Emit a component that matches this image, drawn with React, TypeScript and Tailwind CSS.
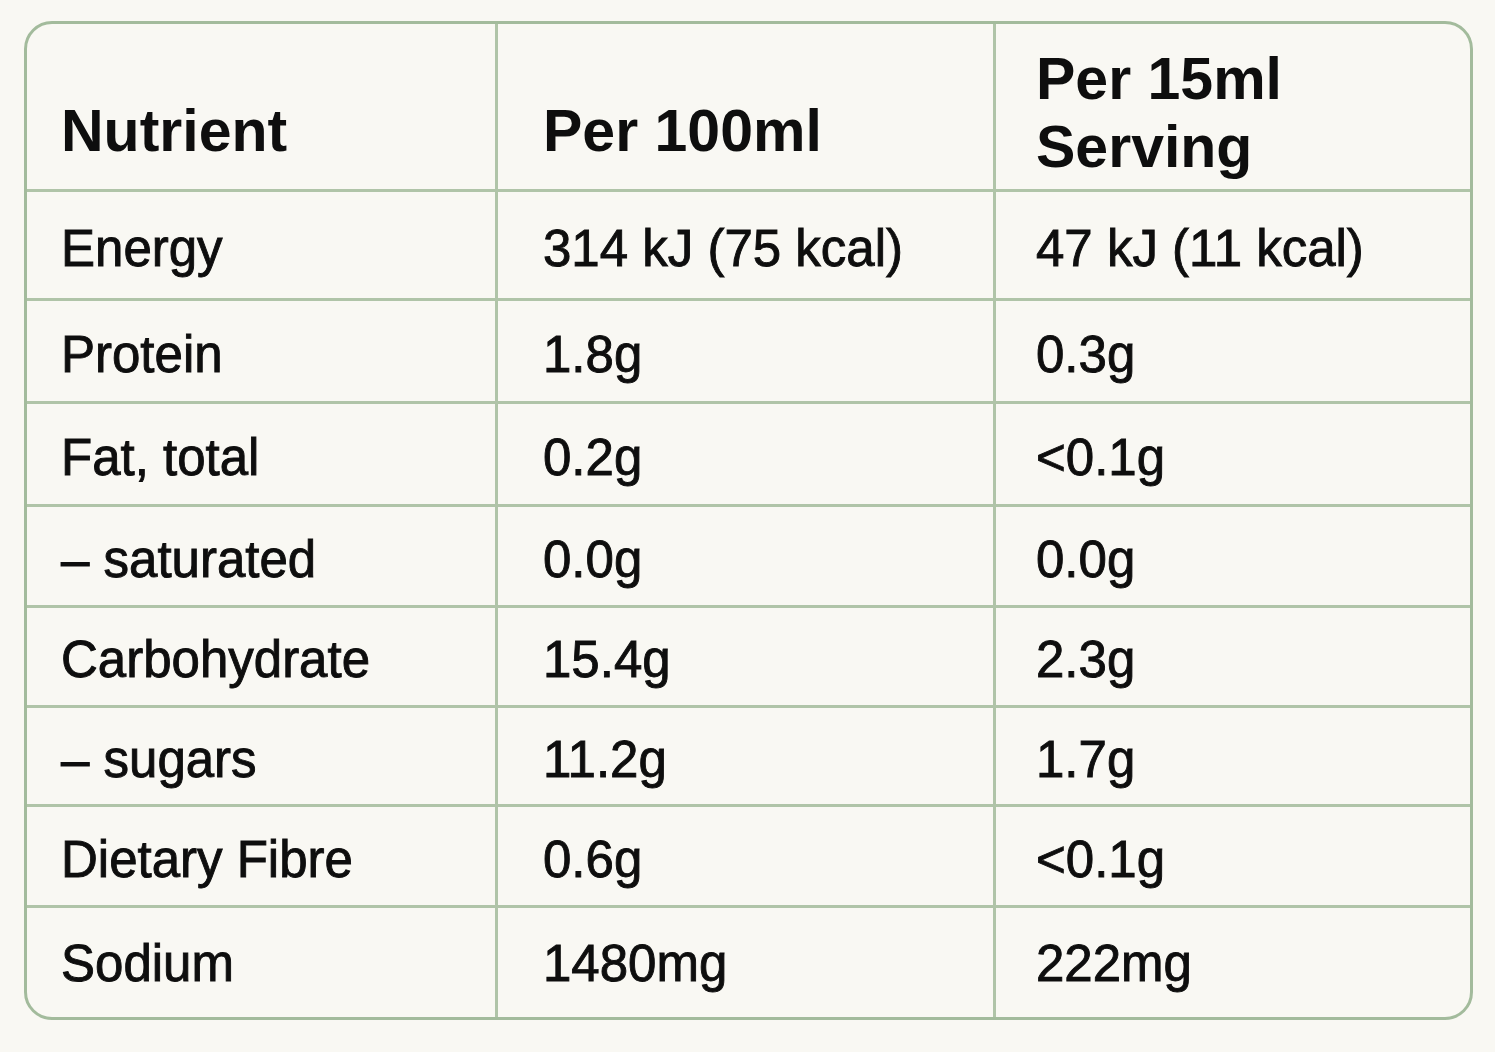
const rows = [
  { name: "Energy", per100: "314 kJ (75 kcal)", perServing: "47 kJ (11 kcal)", h: "h-[109px]", pad: "pt-[8px]" },
  { name: "Protein", per100: "1.8g", perServing: "0.3g", h: "h-[103px]", pad: "pt-[8px]" },
  { name: "Fat, total", per100: "0.2g", perServing: "<0.1g", h: "h-[103px]", pad: "pt-[8px]" },
  { name: "– saturated", per100: "0.0g", perServing: "0.0g", h: "h-[101px]", pad: "pt-[8px]" },
  { name: "Carbohydrate", per100: "15.4g", perServing: "2.3g", h: "h-[100px]", pad: "pt-[8px]" },
  { name: "– sugars", per100: "11.2g", perServing: "1.7g", h: "h-[99px]", pad: "pt-[8px]" },
  { name: "Dietary Fibre", per100: "0.6g", perServing: "<0.1g", h: "h-[101px]", pad: "pt-[8px]" },
  { name: "Sodium", per100: "1480mg", perServing: "222mg", h: "h-[112px]", pad: "pt-[4px]" },
];

export default function App() {
  return (
    <div
      className="w-[1495px] h-[1052px] bg-[#f9f8f3] pt-[21px] pl-[24px] text-[#0e0e0e]"
      style={{ fontFamily: '"Liberation Sans", Arial, sans-serif' }}
    >
      <div className="w-[1449px] border-[3px] border-[#a3bb9c] rounded-[28px] overflow-hidden">
        {/* Header */}
        <div className="grid grid-cols-[468px_498px_1fr] h-[165px] font-bold text-[59px] leading-[68px]">
          <div className="flex items-center pl-[34px] pt-[48px]">Nutrient</div>
          <div className="flex items-center pl-[45px] pt-[48px] border-l-[3px] border-[#b0c4a8]">Per 100ml</div>
          <div className="flex items-center pl-[40px] pt-[12px] border-l-[3px] border-[#b0c4a8]">
            <span>
              Per 15ml
              <br />
              Serving
            </span>
          </div>
        </div>

        {/* Rows */}
        {rows.map((row) => (
          <div
            key={row.name}
            className={`grid grid-cols-[468px_498px_1fr] ${row.h} border-t-[3px] border-[#b0c4a8] text-[51px] [-webkit-text-stroke:0.9px_#0e0e0e]`}
          >
            <div className={`flex items-center pl-[34px] ${row.pad}`}>{row.name}</div>
            <div className={`flex items-center pl-[45px] border-l-[3px] border-[#b0c4a8] ${row.pad}`}>{row.per100}</div>
            <div className={`flex items-center pl-[40px] border-l-[3px] border-[#b0c4a8] ${row.pad}`}>{row.perServing}</div>
          </div>
        ))}
      </div>
    </div>
  );
}
